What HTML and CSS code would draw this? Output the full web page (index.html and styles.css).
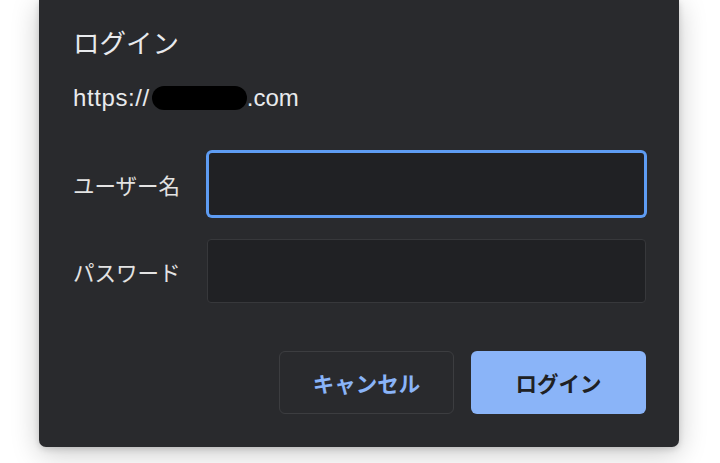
FILE: index.html
```html
<!DOCTYPE html>
<html lang="ja">
<head>
<meta charset="utf-8">
<title>ログイン</title>
<link rel="stylesheet" href="styles.css">
</head>
<body>
<div class="dialog">
  <h1 class="title">ログイン</h1>
  <p class="origin"><span class="scheme">https://</span><span class="redact"></span>.com</p>
  <form class="form">
    <label class="label" for="user">ユーザー名</label>
    <input class="field focused" id="user" type="text">
    <label class="label" for="pass">パスワード</label>
    <input class="field" id="pass" type="password">
  </form>
  <div class="actions">
    <button class="btn cancel" type="button">キャンセル</button>
    <button class="btn primary" type="button">ログイン</button>
  </div>
</div>
</body>
</html>
```

FILE: styles.css
```css
html, body {
  margin: 0;
  padding: 0;
  background: #ffffff;
  height: 100%;
  overflow: hidden;
}
body {
  font-family: "Liberation Sans", "Noto Sans CJK JP", sans-serif;
  color: #e8eaed;
}
.dialog {
  box-sizing: border-box;
  margin-left: 39px;
  width: 640px;
  height: 447px;
  background: #292a2d;
  border-radius: 0 0 7px 7px;
  box-shadow: 0 6px 28px rgba(0, 0, 0, 0.22), 0 2px 6px rgba(0, 0, 0, 0.15);
  padding: 26px 33px 0 34px;
  display: flex;
  flex-direction: column;
}
.title {
  margin: 0;
  font-family: "Noto Sans CJK JP", sans-serif;
  font-weight: 400;
  font-size: 26.5px;
  line-height: 32px;
  color: #e8eaed;
}
.origin {
  margin: 27px 0 0;
  font-size: 24px;
  line-height: 26px;
  color: #e8eaed;
  display: flex;
  align-items: center;
}
.scheme {
  letter-spacing: 0.6px;
}
.redact {
  display: inline-block;
  width: 95px;
  height: 24px;
  background: #000;
  border-radius: 12px;
  margin: 0 0 0 2px;
}
.form {
  margin: 0;
  margin-top: 40px;
  display: grid;
  grid-template-columns: 108px 1fr;
  column-gap: 26px;
  row-gap: 22px;
  align-items: center;
}
.label {
  font-family: "Noto Sans CJK JP", sans-serif;
  font-size: 21.5px;
  color: #e3e3e3;
  white-space: nowrap;
}
.field {
  box-sizing: border-box;
  height: 64px;
  width: 439px;
  background: #202124;
  border: 1px solid #37383b;
  border-radius: 4px;
  outline: none;
  margin: 0;
  color: #e8eaed;
}
.focused {
  height: 66px;
  border: 2px solid #5e9cf3;
  box-shadow: 0 0 0 1px #5e9cf3;
  border-radius: 5px;
}
.actions {
  margin-top: 48px;
  display: flex;
  justify-content: flex-end;
  gap: 17px;
}
.btn {
  box-sizing: border-box;
  width: 175px;
  height: 63px;
  border-radius: 6px;
  font-family: "Noto Sans CJK JP", sans-serif;
  font-weight: 700;
  font-size: 21.5px;
  cursor: pointer;
}
.cancel {
  background: transparent;
  border: 1px solid #3c3d40;
  color: #8ab4f8;
}
.primary {
  background: #8ab4f8;
  border: none;
  color: #202124;
}
```
